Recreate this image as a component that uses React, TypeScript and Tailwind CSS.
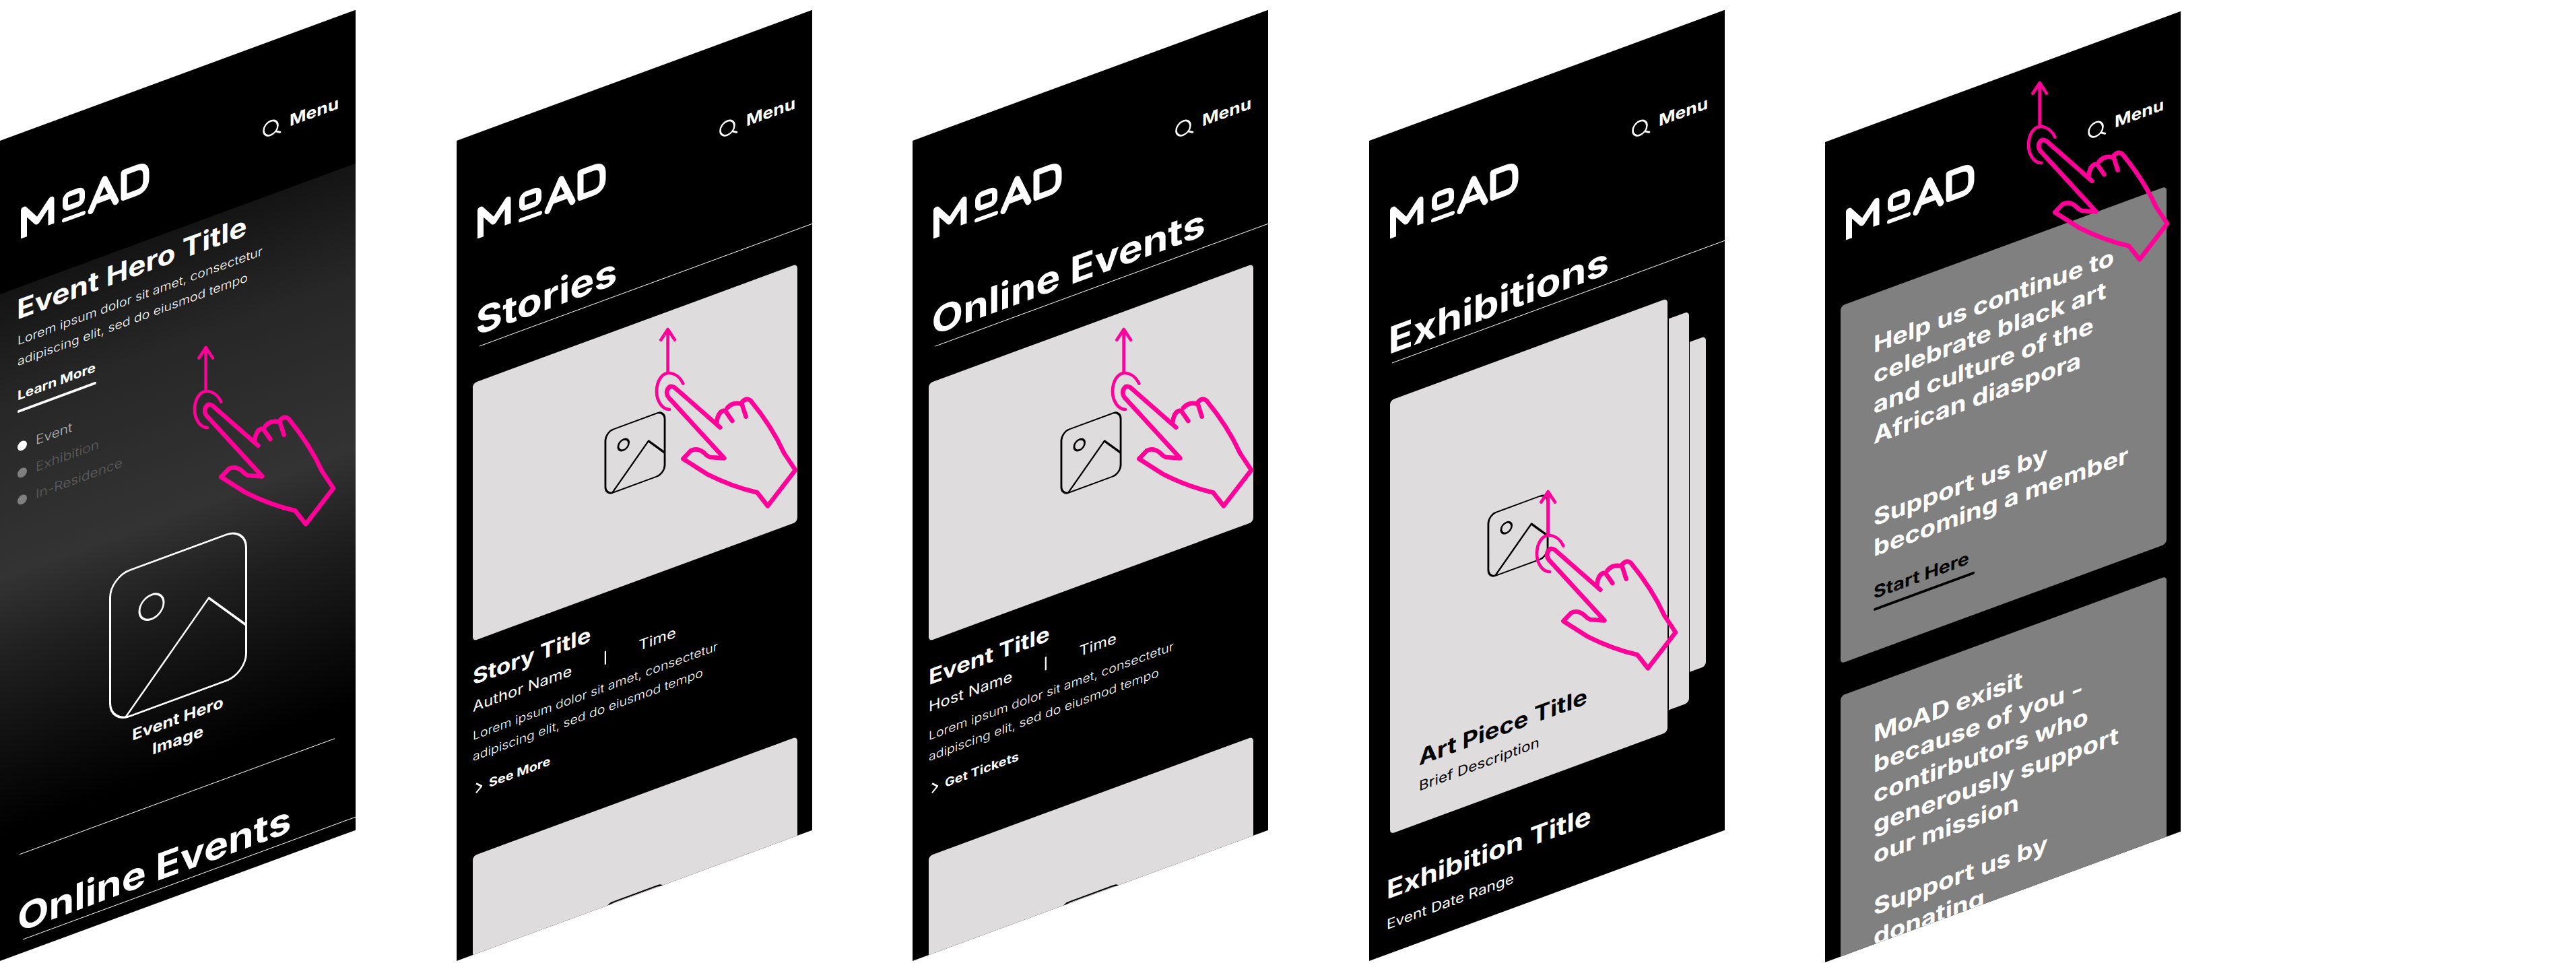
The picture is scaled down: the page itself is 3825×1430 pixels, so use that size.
import React from "react";

const wide = "origin-left scale-x-[1.1] whitespace-nowrap";
const rule = "h-px bg-white";

function Logo() {
  return (
    <svg width="191" height="48" viewBox="0 0 191 48" fill="none" stroke="#fff" strokeWidth="9" className="block shrink-0 overflow-visible">
      <path d="M4.5 47V5.5L24 30 45 5.5V42" strokeLinejoin="round" />
      <rect x="66" y="7" width="25" height="20" rx="6" strokeWidth="8" />
      <path d="M64 43H93" strokeWidth="6" strokeLinecap="round" />
      <path d="M104 44 124 4 141 44M112 32H134" strokeLinecap="round" strokeLinejoin="round" />
      <path d="M153 5H172Q186 5 186 19V27Q186 42 172 42H153Z" strokeLinejoin="round" />
    </svg>
  );
}

function Header() {
  return (
    <div className="mt-[110px] flex h-[48px] pl-[31px]">
      <Logo />
      <div className="ml-[168px] mt-[6px] flex h-[26px] items-center gap-[13px]">
        <svg width="27" height="27" viewBox="0 0 27 27" fill="none" stroke="#fff" strokeWidth="2.6" strokeLinecap="round" className="shrink-0 overflow-visible">
          <circle cx="12" cy="13" r="10.5" />
          <path d="M19.5 20.5 26 24.5" />
        </svg>
        <div className={`${wide} text-[24px] leading-[26px] font-bold text-white`}>Menu</div>
      </div>
    </div>
  );
}

function ImageIcon({ className, stroke, sw }: { className: string; stroke: string; sw: number }) {
  return (
    <svg viewBox="0 0 205 220" fill="none" stroke={stroke} strokeWidth={sw} strokeLinejoin="round" className={className}>
      <rect x="1.5" y="1.5" width="202" height="217" rx="30" />
      <circle cx="63" cy="68" r="18" />
      <path d="M24 218 148 86 203 146" />
    </svg>
  );
}

function Hand({ className }: { className: string }) {
  return (
    <svg viewBox="0 0 660 960" fill="none" stroke="#ff0099" strokeLinecap="round" strokeLinejoin="round" className={`absolute z-10 h-[320px] w-[220px] overflow-visible ${className}`}>
      <path d="M17 300V110M-14 155 17 108 48 155" strokeWidth="14" />
      <path d="M85 350C70 318 45 303 20 303-10 303-33 340-33 385-33 425-10 465 24 465" strokeWidth="14" />
      <path
        d="M250 545 48 368Q25 352 14 380 8 402 28 420L268 682 205 678Q190 672 178 658 150 635 120 648L85 685 190 752Q300 808 415 835L462 895 585 735 535 660Q480 540 385 425 365 410 345 435L365 497"
        strokeWidth="20"
      />
      <path d="M235 520Q242 470 272 470L304 516M282 458Q305 430 345 440" strokeWidth="20" />
    </svg>
  );
}

function Panel({ children, hand, className = "" }: { children: React.ReactNode; hand: string; className?: string }) {
  return (
    <div className="relative h-[1218px] w-[528px] shrink-0">
      <div className={`h-[1218px] w-[528px] origin-top-left overflow-hidden bg-black [transform:skewY(-20.2deg)] ${className}`}>{children}</div>
      <Hand className={hand} />
    </div>
  );
}

function Heading({ children, top, lift }: { children: React.ReactNode; top: string; lift: string }) {
  return (
    <>
      <div className={`${wide} ${top} pl-[26px] text-[55px] leading-[64px] font-bold text-white`}>{children}</div>
      <div className={`${rule} ${lift} ml-[34px]`} />
    </>
  );
}

function Card({ className = "" }: { className?: string }) {
  return (
    <div className={`ml-[24px] flex h-[383px] w-[482px] shrink-0 items-center justify-center rounded-[6px] bg-[#dedcdc] ${className}`}>
      <ImageIcon stroke="#000" sw={6.5} className="h-[96px] w-[92px]" />
    </div>
  );
}

function Lorem({ className }: { className: string }) {
  return (
    <div className={`${wide} text-[17.7px] leading-[30.5px] font-light text-white ${className}`}>
      Lorem ipsum dolor sit amet, consectetur
      <br />
      adipiscing elit, sed do eiusmod tempo
    </div>
  );
}

function Listing({ title, name, cta }: { title: string; name: string; cta: string }) {
  return (
    <>
      <Card className="mt-[51px]" />
      <div className={`${wide} ml-[24px] mt-[36px] text-[31.5px] leading-[36px] font-bold text-white`}>{title}</div>
      <div className={`${wide} ml-[24px] mt-[11px] flex h-[28px] items-center gap-[44px] text-[21.5px] leading-[28px] font-normal text-white`}>
        <span>{name}</span>
        <span className="block h-[20px] w-[2px] bg-white" />
        <span>Time</span>
      </div>
      <Lorem className="ml-[24px] mt-[15px]" />
      <div className="ml-[28px] mt-[21px] flex h-[24px] items-center gap-[10px]">
        <svg width="10" height="16" viewBox="0 0 10 16" fill="none" stroke="#fff" strokeWidth="2.4" className="shrink-0">
          <path d="M1 1 9 8 1 15" />
        </svg>
        <div className={`${wide} text-[18px] leading-[24px] font-bold text-white`}>{cta}</div>
      </div>
      <Card className="mt-[87px]" />
    </>
  );
}

function HeroPanel() {
  return (
    <Panel hand="left-[300px] top-[270.6px]">
      <Header />
      <div className="mt-[70px] flex h-[844px] flex-col bg-[linear-gradient(180deg,#141414_0%,#272727_20%,#333333_50%,#1f1f1f_65%,#0a0a0a_85%,#000000_95%)]">
        <div className={`${wide} ml-[25px] mt-[9px] text-[40px] leading-[48px] font-bold text-white`}>Event Hero Title</div>
        <Lorem className="ml-[26px] mt-[7px]" />
        <div className={`${wide} ml-[26px] mt-[23px] text-[19px] leading-[26px] font-bold text-white`}>Learn More</div>
        <div className="ml-[26px] mt-[8px] h-[4px] w-[117px] rounded-full bg-white" />
        <div className="ml-[26px] mt-[38px] flex flex-col gap-[14px] text-[19px] leading-[26px] font-light">
          <div className="flex h-[26px] items-center gap-[13px] text-[#b5b5b5]">
            <span className="block h-[14px] w-[14px] rounded-full bg-white" />
            <div className={wide}>Event</div>
          </div>
          <div className="flex h-[26px] items-center gap-[13px] text-[#5e5e5e]">
            <span className="block h-[14px] w-[14px] rounded-full bg-[#808080]" />
            <div className={wide}>Exhibition</div>
          </div>
          <div className="flex h-[26px] items-center gap-[13px] text-[#5e5e5e]">
            <span className="block h-[14px] w-[14px] rounded-full bg-[#808080]" />
            <div className={wide}>In-Residence</div>
          </div>
        </div>
        <ImageIcon stroke="#fff" sw={3} className="mx-auto mt-[149px] h-[220px] w-[205px] shrink-0" />
        <div className="mt-[12px] origin-center scale-x-[1.1] text-center text-[23px] leading-[32px] font-bold text-white">
          Event Hero
          <br />
          Image
        </div>
        <div className={`${rule} ml-[29px] mt-[67px] w-[468px] shrink-0`} />
      </div>
      <div className={`${wide} ml-[26px] mt-[61px] text-[55px] leading-[64px] font-bold text-white`}>Online Events</div>
      <div className={`${rule} ml-[34px] mt-[1px]`} />
    </Panel>
  );
}

function DonateCard({ children, className }: { children: React.ReactNode; className: string }) {
  return <div className={`ml-[23px] flex w-[484px] shrink-0 flex-col rounded-[6px] bg-[#808080] pl-[49px] ${className}`}>{children}</div>;
}

export default function App() {
  const copy = `${wide} text-[34.5px] leading-[45px] font-bold text-white`;
  return (
    <div className="h-[1430px] w-[3825px] overflow-hidden bg-white font-['Inter',sans-serif]">
      <div className="flex gap-[149.6px] pt-[209.4px]">
        <HeroPanel />
        <Panel hand="left-[308px] top-[243.6px]">
          <Header />
          <Heading top="mt-[90px]" lift="mt-[5px]">Stories</Heading>
          <Listing title="Story Title" name="Author Name" cta="See More" />
        </Panel>
        <Panel hand="left-[308px] top-[243.6px]">
          <Header />
          <Heading top="mt-[90px]" lift="mt-[5px]">Online Events</Heading>
          <Listing title="Event Title" name="Host Name" cta="Get Tickets" />
        </Panel>
        <Panel hand="left-[260.3px] top-[485px]">
          <Header />
          <Heading top="mt-[118px]" lift="mt-[2px]">Exhibitions</Heading>
          <div className="ml-[30.6px] mt-[53.6px] flex items-center gap-[1.5px]">
            <div className="flex h-[644px] w-[412.5px] shrink-0 flex-col rounded-[6px] bg-[#dedcdc]">
              <ImageIcon stroke="#000" sw={6.5} className="ml-[144px] mt-[223px] h-[96px] w-[92px] shrink-0" />
              <div className={`${wide} ml-[43px] mt-[207px] text-[33px] leading-[40px] font-bold text-black`}>Art Piece Title</div>
              <div className={`${wide} ml-[43px] mt-[10px] text-[20.5px] leading-[26px] font-normal text-black`}>Brief Description</div>
            </div>
            <div className="h-[581px] w-[30px] shrink-0 rounded-[6px] rounded-l-none bg-[#dedcdc]" />
            <div className="h-[490px] w-[23.5px] shrink-0 rounded-[6px] rounded-l-none bg-[#dedcdc]" />
          </div>
          <div className={`${wide} ml-[26px] mt-[58px] text-[38px] leading-[46px] font-bold text-white`}>Exhibition Title</div>
          <div className={`${wide} ml-[26px] mt-[16px] text-[20.5px] leading-[26px] font-normal text-white`}>Event Date Range</div>
        </Panel>
        <Panel hand="left-[313px] top-[-122.4px]" className="mt-[1.5px]">
          <Header />
          <DonateCard className="mt-[94px] h-[531px] pt-[53px]">
            <div className={copy}>
              Help us continue to
              <br />
              celebrate black art
              <br />
              and culture of the
              <br />
              African diaspora
            </div>
            <div className={`${copy} mt-[77px]`}>
              Support us by
              <br />
              becoming a member
            </div>
            <div className={`${wide} mt-[28px] text-[26px] leading-[32px] font-bold text-black`}>Start Here</div>
            <div className="mt-[7px] h-[4px] w-[150px] rounded-full bg-black" />
          </DonateCard>
          <DonateCard className="mt-[48px] h-[700px] pt-[52px]">
            <div className={copy}>
              MoAD exisit
              <br />
              because of you -
              <br />
              contirbutors who
              <br />
              generously support
              <br />
              our mission
            </div>
            <div className={`${copy} mt-[32px]`}>
              Support us by
              <br />
              donating
            </div>
          </DonateCard>
        </Panel>
      </div>
    </div>
  );
}
